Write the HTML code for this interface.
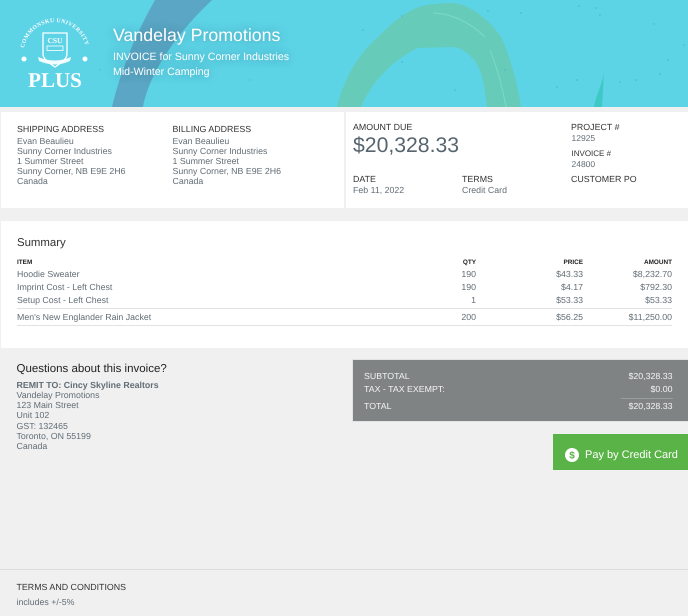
<!DOCTYPE html>
<html><head><meta charset="utf-8"><style>
html,body{margin:0;padding:0}
body{width:688px;height:616px;overflow:hidden;background:#f0f0f0;position:relative;font-family:"Liberation Sans",Arial,sans-serif;font-size:8.8px;color:#626d75;text-rendering:geometricPrecision}
.a{position:absolute;white-space:nowrap}
.h{color:#333;font-size:8.85px}
.w{position:absolute;background:#fff}
.r{text-align:right}
.b{font-weight:bold;font-size:6.4px;color:#222;line-height:10px;top:258px}
.t{line-height:12px}
.v{color:#f4f4f4;line-height:12px}
</style></head><body>
<svg class="a" style="left:0;top:0" width="688" height="107" viewBox="0 0 688 107">
<defs><path id="arc" d="M24 48 A31.500 31.500 0 0 1 86 48"/></defs>
<rect width="688" height="107" fill="#5dd3e6"/>
<path d="M155 0 L212 0 C180 30 150 70 143 107 L112 107 C122 65 138 30 155 0Z" fill="#5aa6c4"/>
<path d="M337 107 C345 75 360 53 377 38 C395 20 410 8 427 5 C440 3 450 3 454 3 C470 5 490 20 501 37 C510 55 518 85 521 107 L487 107 C485 90 483 80 481 73 C478 65 475 60 471 57 C465 50 458 47 451 47 L417 48 C405 55 395 60 377 80 C370 90 365 97 361 107Z" fill="#66ccb9"/>
<path d="M433 13 C450 13 470 22 485 37" stroke="#7fd8c6" stroke-width="1" fill="none"/>
<path d="M490 50 C498 70 503 90 506 107" stroke="#7fd8c6" stroke-width="1" fill="none"/>
<path d="M604 72 C602 85 596 95 594 107 L602 107Z" fill="#3ec8c6"/>
<g fill="#3f9cbc" opacity=".6"><circle cx="402" cy="16" r=".8"/><circle cx="488" cy="11" r=".8"/><circle cx="521" cy="13" r=".8"/><circle cx="579" cy="6" r=".8"/><circle cx="596" cy="8" r=".8"/><circle cx="600" cy="15" r=".8"/><circle cx="363" cy="30" r=".8"/><circle cx="402" cy="62" r=".8"/><circle cx="455" cy="90" r=".8"/><circle cx="505" cy="70" r=".8"/><circle cx="577" cy="80" r=".8"/><circle cx="557" cy="87" r=".8"/><circle cx="668" cy="60" r=".8"/><circle cx="660" cy="74" r=".8"/><circle cx="636" cy="80" r=".8"/><circle cx="336" cy="40" r=".6"/><circle cx="250" cy="80" r=".6"/><circle cx="100" cy="70" r=".6"/><circle cx="654" cy="24" r=".7"/><circle cx="620" cy="82" r=".7"/><circle cx="684" cy="45" r=".7"/></g>
<text font-family="Liberation Serif" font-size="5.700" font-weight="bold" fill="#fff" letter-spacing=".4"><textPath href="#arc" startOffset="0">COMMONSKU UNIVERSITY</textPath></text>
<path d="M43 33 H67 V54 C67 59 61 63 55 67 C49 63 43 59 43 54Z" fill="none" stroke="#fff" stroke-width="1.300"/>
<text x="55" y="43" font-family="Liberation Serif" font-size="7.500" font-weight="bold" fill="#fff" text-anchor="middle">CSU</text>
<rect x="47" y="46" width="16" height="4.500" fill="none" stroke="#fff" stroke-width=".8"/>
<path d="M38 57 Q55 64 71 57 L70 61 Q55 68 39 61Z" fill="#fff" opacity=".9"/>
<circle cx="24" cy="59" r="2.500" fill="#fff"/><circle cx="85" cy="59" r="2.500" fill="#fff"/>
<text x="55" y="87" font-family="Liberation Serif" font-size="21" font-weight="bold" fill="#fff" text-anchor="middle">PLUS</text>
</svg>
<div class="a" style="left:113px;top:24px;font-size:17.750px;line-height:22px;color:#fff;text-shadow:0 0 8px rgba(60,120,140,.5)">Vandelay Promotions</div>
<div class="a" style="left:113px;top:50px;font-size:10.600px;line-height:14px;color:#fff;text-shadow:0 0 8px rgba(60,120,140,.5)">INVOICE for Sunny Corner Industries</div>
<div class="a" style="left:113px;top:65px;font-size:10.600px;line-height:14px;color:#fff;text-shadow:0 0 8px rgba(60,120,140,.5)">Mid-Winter Camping</div>

<div class="w" style="left:1px;top:112px;width:343px;height:96px"></div>
<div class="w" style="left:346px;top:112px;width:342px;height:96px"></div>
<div class="w" style="left:1px;top:221px;width:687px;height:127px"></div>

<div class="a h t" style="left:17px;top:123px">SHIPPING ADDRESS</div>
<div class="a" style="left:17px;top:135.500px;line-height:10.200px">Evan Beaulieu<br>Sunny Corner Industries<br>1 Summer Street<br>Sunny Corner, NB E9E 2H6<br>Canada</div>
<div class="a h t" style="left:172.500px;top:123px">BILLING ADDRESS</div>
<div class="a" style="left:172.500px;top:135.500px;line-height:10.200px">Evan Beaulieu<br>Sunny Corner Industries<br>1 Summer Street<br>Sunny Corner, NB E9E 2H6<br>Canada</div>

<div class="a h t" style="left:353px;top:121px">AMOUNT DUE</div>
<div class="a" style="left:353px;top:132px;font-size:21.200px;line-height:28px;color:#56646e">$20,328.33</div>
<div class="a h t" style="left:353px;top:173px">DATE</div>
<div class="a t" style="left:353px;top:184px">Feb 11, 2022</div>
<div class="a h t" style="left:462px;top:173px">TERMS</div>
<div class="a t" style="left:462px;top:184px">Credit Card</div>
<div class="a h t" style="left:571px;top:121px">PROJECT #</div>
<div class="a t" style="left:571.500px;top:132px;font-size:8.500px">12925</div>
<div class="a h t" style="left:571.500px;top:148px;font-size:8px">INVOICE #</div>
<div class="a t" style="left:571.500px;top:158px;font-size:8.500px">24800</div>
<div class="a h t" style="left:571px;top:173px">CUSTOMER PO</div>

<div class="a" style="left:17px;top:235px;font-size:11.400px;line-height:16px;color:#333">Summary</div>
<div class="a b" style="left:17px">ITEM</div>
<div class="a b r" style="right:212px">QTY</div>
<div class="a b r" style="right:105px">PRICE</div>
<div class="a b r" style="right:16px">AMOUNT</div>
<div class="a t" style="left:17px;top:268px">Hoodie Sweater</div><div class="a r t" style="right:212px;top:268px">190</div><div class="a r t" style="right:105px;top:268px">$43.33</div><div class="a r t" style="right:16px;top:268px">$8,232.70</div>
<div class="a t" style="left:17px;top:281px">Imprint Cost - Left Chest</div><div class="a r t" style="right:212px;top:281px">190</div><div class="a r t" style="right:105px;top:281px">$4.17</div><div class="a r t" style="right:16px;top:281px">$792.30</div>
<div class="a t" style="left:17px;top:294px">Setup Cost - Left Chest</div><div class="a r t" style="right:212px;top:294px">1</div><div class="a r t" style="right:105px;top:294px">$53.33</div><div class="a r t" style="right:16px;top:294px">$53.33</div>
<div class="a" style="left:17px;top:308px;width:655px;height:1px;background:#e2e2e2"></div>
<div class="a t" style="left:17px;top:311px">Men's New Englander Rain Jacket</div><div class="a r t" style="right:212px;top:311px">200</div><div class="a r t" style="right:105px;top:311px">$56.25</div><div class="a r t" style="right:16px;top:311px">$11,250.00</div>
<div class="a" style="left:17px;top:325px;width:655px;height:1px;background:#e2e2e2"></div>

<div class="a" style="left:16.500px;top:361px;font-size:11.500px;line-height:16px;color:#222">Questions about this invoice?</div>
<div class="a" style="left:16.500px;top:380px;line-height:10.150px"><b>REMIT TO: Cincy Skyline Realtors</b><br>Vandelay Promotions<br>123 Main Street<br>Unit 102<br>GST: 132465<br>Toronto, ON 55199<br>Canada</div>

<div class="a" style="left:352px;top:359px;width:336px;height:63px;background:#7f8384;border:1px solid #e3e3e3;border-right:0;box-sizing:border-box"></div>
<div class="a v" style="left:364px;top:370px">SUBTOTAL</div>
<div class="a v" style="left:364px;top:383px">TAX - TAX EXEMPT:</div>
<div class="a v" style="left:364px;top:400px">TOTAL</div>
<div class="a r v" style="right:15.500px;top:370px">$20,328.33</div>
<div class="a r v" style="right:15.500px;top:383px">$0.00</div>
<div class="a" style="left:621px;top:398px;width:52px;height:1px;background:#9a9d9e"></div>
<div class="a r v" style="right:15.500px;top:400px">$20,328.33</div>

<div class="a" style="left:553px;top:434px;width:135px;height:36px;background:#5ab347"></div>
<svg class="a" style="left:565px;top:448px" width="14" height="14" viewBox="0 0 14 14"><circle cx="7" cy="7" r="7" fill="#fff"/><text x="7" y="10.500" font-size="10" font-weight="bold" fill="#5ab347" text-anchor="middle" font-family="Liberation Sans">$</text></svg>
<div class="a" style="left:585px;top:448px;font-size:11px;line-height:15px;color:#fff">Pay by Credit Card</div>

<div class="a" style="left:0;top:569px;width:688px;height:1px;background:#dcdcdc"></div>
<div class="a h t" style="left:16.500px;top:581px;color:#333">TERMS AND CONDITIONS</div>
<div class="a t" style="left:16.500px;top:596px">includes +/-5%</div>
</body></html>
